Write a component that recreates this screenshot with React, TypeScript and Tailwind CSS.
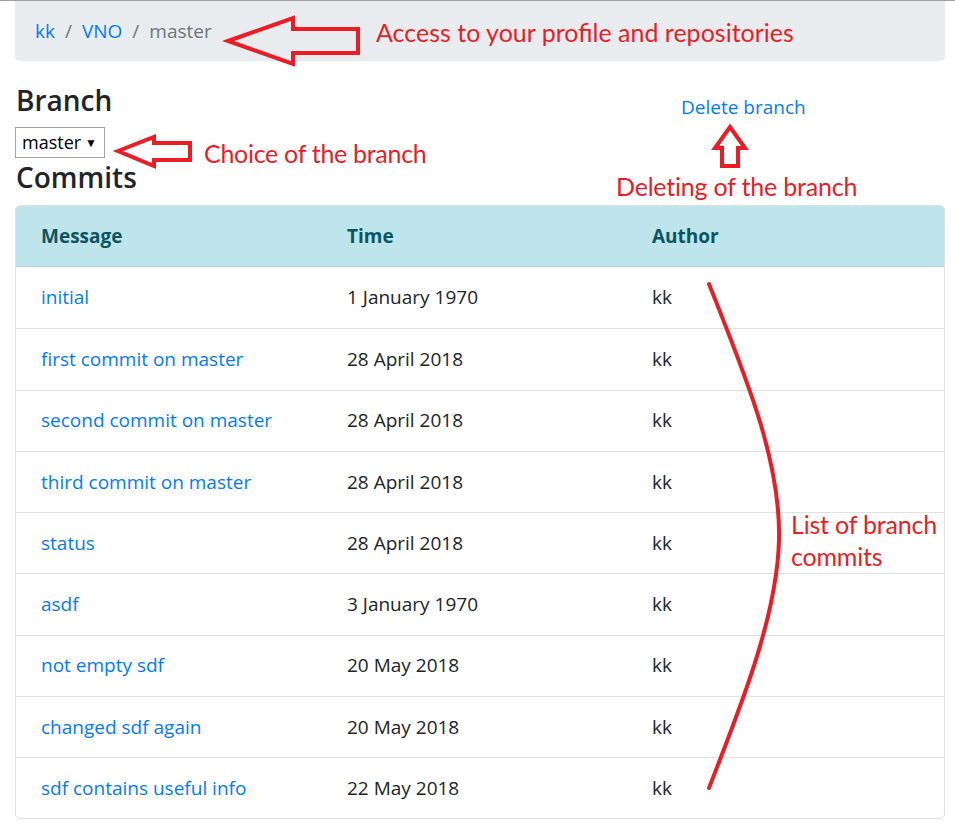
import React from "react";

const commits = [
  { msg: "initial", time: "1 January 1970", author: "kk" },
  { msg: "first commit on master", time: "28 April 2018", author: "kk" },
  { msg: "second commit on master", time: "28 April 2018", author: "kk" },
  { msg: "third commit on master", time: "28 April 2018", author: "kk" },
  { msg: "status", time: "28 April 2018", author: "kk" },
  { msg: "asdf", time: "3 January 1970", author: "kk" },
  { msg: "not empty sdf", time: "20 May 2018", author: "kk" },
  { msg: "changed sdf again", time: "20 May 2018", author: "kk" },
  { msg: "sdf contains useful info", time: "22 May 2018", author: "kk" },
];

export default function App() {
  return (
    <div className="relative w-[955px] h-[825px] overflow-hidden bg-white text-[#212529] font-['Open_Sans',sans-serif]">
      <div className="h-px bg-[#a0a0a0]" />
      <div className="pl-[15px] pr-[10px]">
        {/* breadcrumb */}
        <nav className="h-[60px] bg-[#e9ecef] rounded-b-[5px] flex items-center px-5 text-[19px]">
          <a className="text-[#007bff]">kk</a>
          <span className="px-[10px] text-[#6c757d]">/</span>
          <a className="text-[#007bff]">VNO</a>
          <span className="px-[10px] text-[#6c757d]">/</span>
          <span className="text-[#6c757d]">master</span>
        </nav>

        {/* branch + delete */}
        <div className="flex mt-[21px]">
          <div className="w-[666px]">
            <h3 className="text-[28px] leading-[36px] font-semibold pl-px">Branch</h3>
            <div className="mt-[9px] w-[90px] h-[31px] border border-[#a6a6a6] flex items-center justify-between pl-[6px] pr-[7px] text-[18px] text-black">
              <span>master</span>
              <span className="text-[12px]">▼</span>
            </div>
            <h3 className="text-[28px] leading-[38px] font-semibold pl-px">Commits</h3>
          </div>
          <div className="pt-[10px]">
            <a className="text-[19px] leading-[30px] text-[#007bff]">Delete branch</a>
          </div>
        </div>

        {/* commits table */}
        <div className="mt-[9px] border border-[#dee2e6] rounded-[5px] overflow-hidden text-[19px]">
          <div className="grid grid-cols-[306px_305px_1fr] h-[61px] items-center bg-[#bee5eb] text-[#0c5460] font-bold border-b border-[#a9d4dc]">
            <div className="pl-[25px]">Message</div>
            <div className="pl-[25px]">Time</div>
            <div className="pl-[25px]">Author</div>
          </div>
          {commits.map((c, i) => (
            <div
              key={i}
              className={
                "grid grid-cols-[306px_305px_1fr] h-[61.25px] items-center " +
                (i > 0 ? "border-t border-[#dee2e6]" : "")
              }
            >
              <div className="pl-[25px]">
                <a className="text-[#007bff]">{c.msg}</a>
              </div>
              <div className="pl-[25px]">{c.time}</div>
              <div className="pl-[25px]">{c.author}</div>
            </div>
          ))}
        </div>
      </div>

      {/* annotations */}
      <svg
        className="absolute inset-0 pointer-events-none"
        width="955"
        height="825"
        viewBox="0 0 955 825"
      >
        <g fill="none" stroke="#ed1c24" strokeWidth="4" strokeLinejoin="miter">
          <polygon points="228,41 293,18 293,29 358,29 358,53 293,53 293,64" />
          <polygon points="118,151 154,137 154,143 190,143 190,160 154,160 154,166" />
          <polygon points="730,127 745,148 738,148 738,166 722,166 722,148 715,148" />
          <path
            d="M709 284 C 745 375, 781 460, 779 540 C 777 620, 737 715, 709 788"
            strokeLinecap="round"
          />
        </g>
      </svg>
      <div className="absolute left-[376px] top-[20px] text-[25px] leading-none text-[#ed1c24] font-['Lato',sans-serif] whitespace-nowrap">
        Access to your profile and repositories
      </div>
      <div className="absolute left-[204px] top-[141px] text-[25px] leading-none tracking-[-0.3px] text-[#ed1c24] font-['Lato',sans-serif] whitespace-nowrap">
        Choice of the branch
      </div>
      <div className="absolute left-[616px] top-[174px] text-[25px] leading-none tracking-[-0.2px] text-[#ed1c24] font-['Lato',sans-serif] whitespace-nowrap">
        Deleting of the branch
      </div>
      <div className="absolute left-[791px] top-[508px] text-[25px] leading-[32px] tracking-[-0.2px] text-[#ed1c24] font-['Lato',sans-serif] whitespace-nowrap">
        List of branch
        <br />
        commits
      </div>
    </div>
  );
}
